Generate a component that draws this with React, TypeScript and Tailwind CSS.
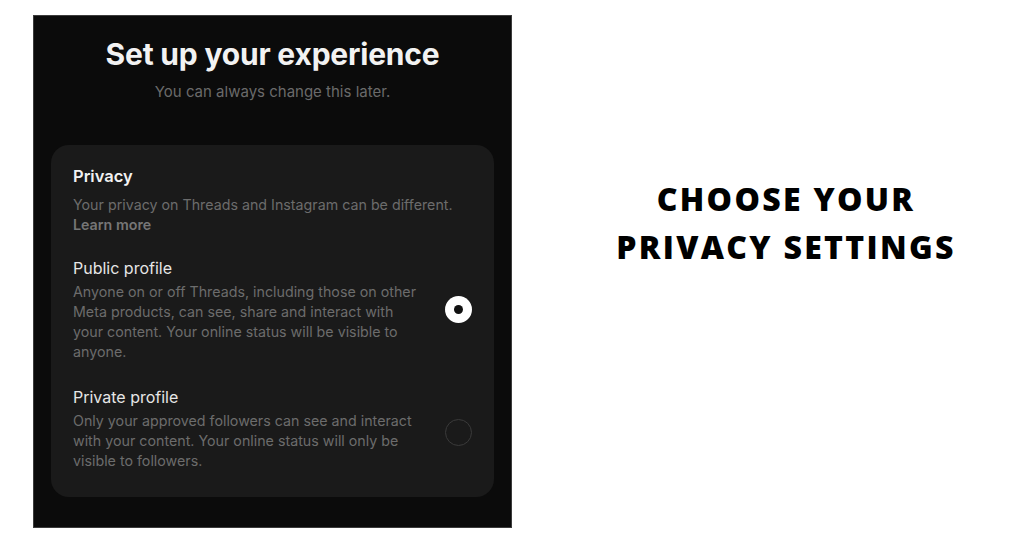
import React from 'react';

interface OptionProps {
  title: string;
  text: string;
  selected: boolean;
}

const Option: React.FC<OptionProps> = ({ title, text, selected }) => (
  <div className="flex items-center">
    <div className="w-[352px]">
      <div className="text-[16px] leading-[22px] text-[#e6e6e6]">{title}</div>
      <div className="mt-[3px] text-[14.25px] leading-[20px] text-[#6c6c6c]">{text}</div>
    </div>
    <div className="ml-auto flex items-center justify-center">
      {selected ? (
        <div className="w-[27px] h-[27px] rounded-full bg-white flex items-center justify-center">
          <div className="w-[9px] h-[9px] rounded-full bg-[#111]" />
        </div>
      ) : (
        <div className="w-[27px] h-[27px] rounded-full border-[1.5px] border-[#3a3a3a] mt-[8px]" />
      )}
    </div>
  </div>
);

const App: React.FC = () => {
  return (
    <div className="w-full h-[536px] bg-white flex" style={{ fontFamily: 'Inter, "Noto Sans", sans-serif' }}>
      <div className="ml-[33px] mt-[15px] w-[479px] h-[513px] bg-[#0b0b0b] border border-[#3c3c3c] flex flex-col">
        <h1 className="mt-[20px] text-center text-[30px] leading-[36px] font-bold text-[#f2f2f2] tracking-[-0.2px]">
          Set up your experience
        </h1>
        <p className="mt-[10px] text-center text-[15px] leading-[20px] text-[#6a6a6a]">
          You can always change this later.
        </p>
        <div className="mt-[43px] mx-[17px] rounded-[18px] bg-[#1a1a1a] pl-[22px] pr-[22px] pt-[19px] pb-[26px]">
          <div className="text-[16.5px] leading-[24px] font-semibold text-[#f2f2f2]">Privacy</div>
          <div className="mt-[7px] text-[14.25px] leading-[20px] text-[#6c6c6c]">
            Your privacy on Threads and Instagram can be different.
          </div>
          <div className="text-[14.25px] leading-[20px] font-semibold text-[#767676]">Learn more</div>
          <div className="mt-[22px]">
            <Option
              title="Public profile"
              text="Anyone on or off Threads, including those on other Meta products, can see, share and interact with your content. Your online status will be visible to anyone."
              selected
            />
          </div>
          <div className="mt-[24px]">
            <Option
              title="Private profile"
              text="Only your approved followers can see and interact with your content. Your online status will only be visible to followers."
              selected={false}
            />
          </div>
        </div>
      </div>
      <div className="flex-1 pl-[36px] pt-[175px] flex justify-center">
        <div
          className="text-center text-[32px] leading-[48px] font-extrabold tracking-[2.3px] text-black"
          style={{ fontFamily: '"Open Sans", sans-serif' }}
        >
          CHOOSE YOUR
          <br />
          PRIVACY SETTINGS
        </div>
      </div>
    </div>
  );
};

export default App;
